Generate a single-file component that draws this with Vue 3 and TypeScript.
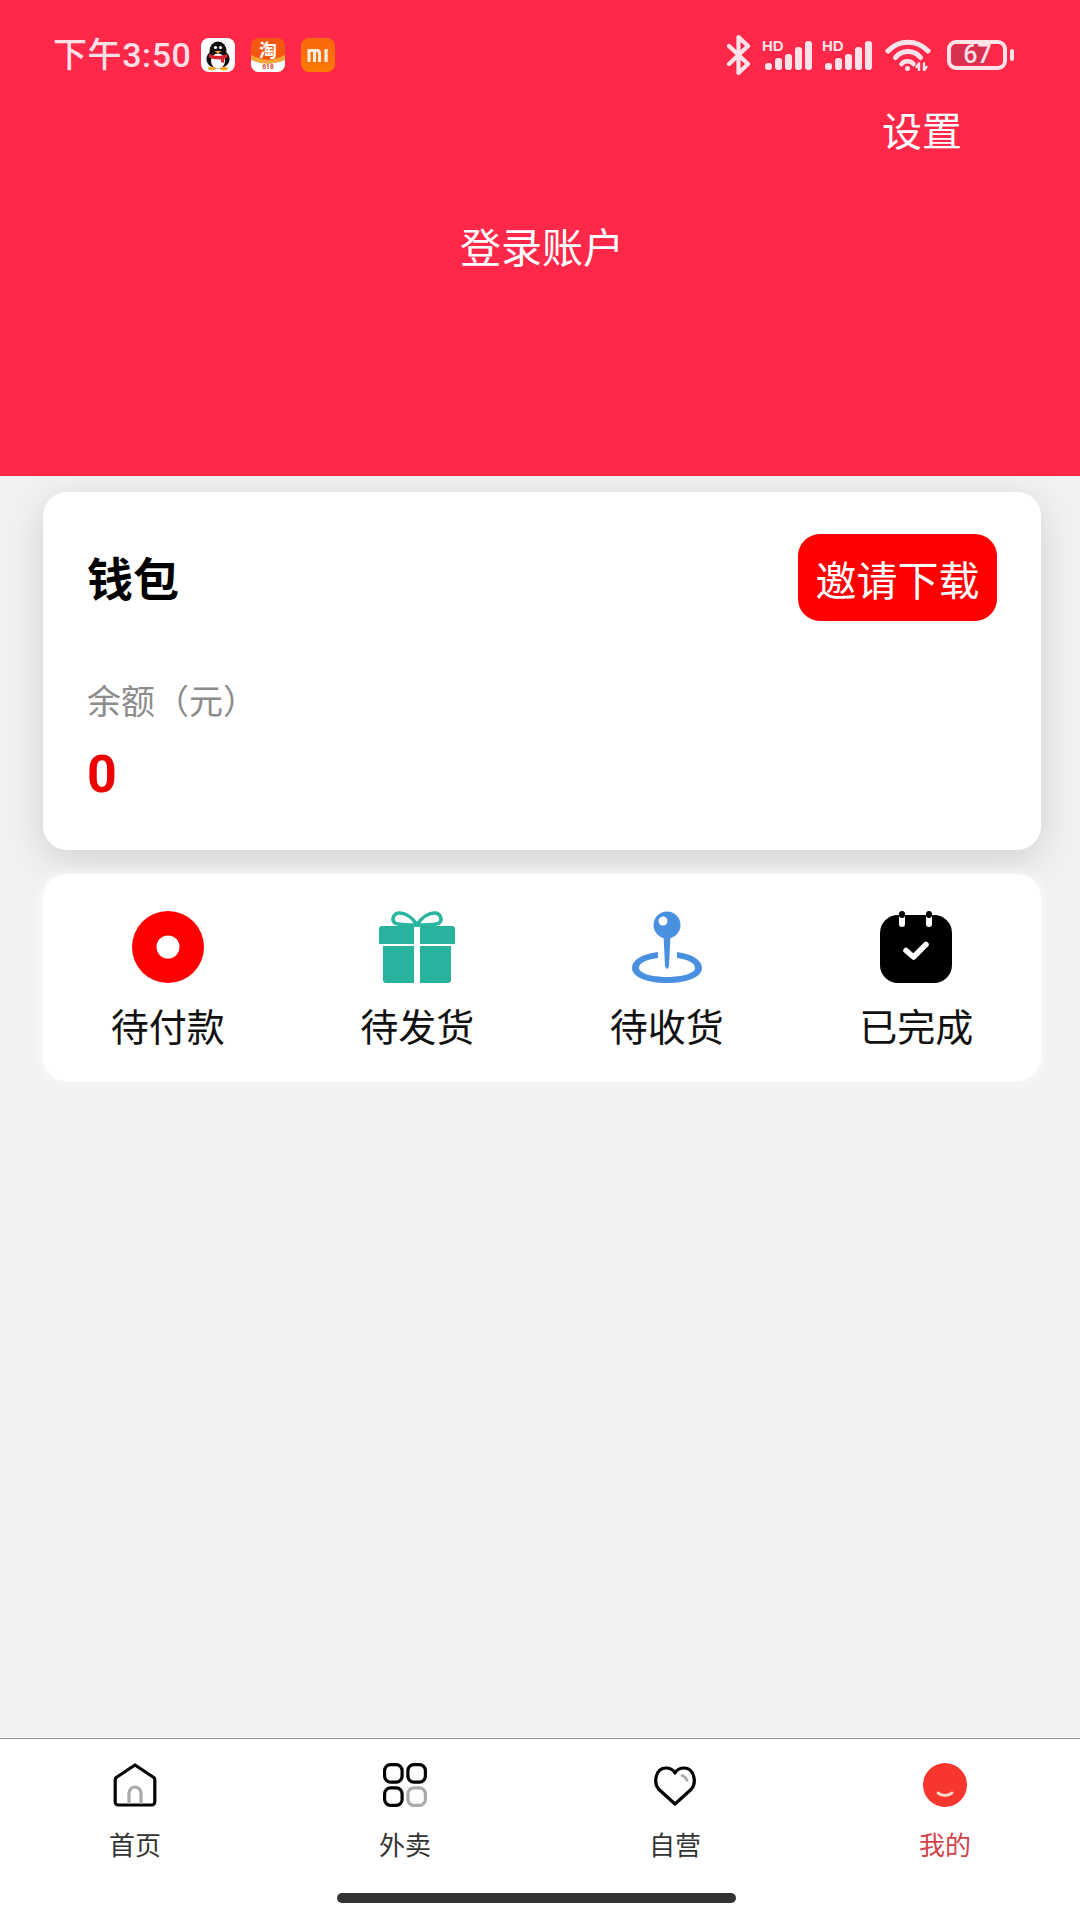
<script setup lang="ts">
const orders = ['待付款', '待发货', '待收货', '已完成']
const tabs = ['首页', '外卖', '自营', '我的']
</script>

<template>
  <div class="page">
    <header class="head">
      <div class="status">
        <div class="status-left">
          <span class="time">下午3:50</span>
          <svg class="app" viewBox="0 0 34 34">
            <rect width="34" height="34" rx="8" fill="#fff" />
            <ellipse cx="17" cy="12.500" rx="8.500" ry="9" fill="#111" />
            <ellipse cx="17" cy="21" rx="11.500" ry="9.500" fill="#111" />
            <ellipse cx="17" cy="23" rx="7" ry="7.500" fill="#fff" />
            <path d="M8 16q9 4 18 0l.5 3.500q-2 1-3.500 1.300V25l-3-1v-2.500q-6 .5-12-2z" fill="#d9232e" />
            <path d="M13.500 13h7l-3.500 2.500z" fill="#f5a623" />
            <ellipse cx="11" cy="30.500" rx="4" ry="1.800" fill="#f5a623" />
            <ellipse cx="23" cy="30.500" rx="4" ry="1.800" fill="#f5a623" />
            <circle cx="14.500" cy="9.500" r="1.600" fill="#fff" />
            <circle cx="19.500" cy="9.500" r="1.600" fill="#fff" />
          </svg>
          <svg class="app tao" viewBox="0 0 36 36">
            <rect width="36" height="36" rx="8" fill="#f4570f" />
            <path d="M0 23q18 8 36 0v5a8 8 0 0 1-8 8H8a8 8 0 0 1-8-8z" fill="#fff" />
            <path d="M0 18q18 10 36 0v5q-18 8-36 0z" fill="#f7a63a" />
            <text x="18" y="20" class="tao-text">淘</text>
            <text x="18" y="33" class="tao-sub">618</text>
          </svg>
          <svg class="app mi" viewBox="0 0 34 34">
            <defs>
              <linearGradient id="mi-grad" x1="0" y1="0" x2="0" y2="1">
                <stop offset="0" stop-color="#f9670c" />
                <stop offset="1" stop-color="#fb7a03" />
              </linearGradient>
            </defs>
            <rect width="34" height="34" rx="8" fill="url(#mi-grad)" />
            <path d="M6.500 11h9.500a4 4 0 0 1 4 4v9h-3v-8.500a1.500 1.500 0 0 0-1.500-1.500H15v10h-3V14h-2.500v10h-3z" fill="#ffeedd" />
            <rect x="23.500" y="11" width="3.200" height="13" fill="#ffeedd" />
          </svg>
        </div>
        <div class="status-right">
          <svg class="bt" viewBox="0 0 25 40" fill="none" stroke="#ffe3e8" stroke-width="4.200" stroke-linejoin="round" stroke-linecap="round">
            <path d="M3 11l19 18-9.500 9V2L22 11 3 29" />
          </svg>
          <svg v-for="n in 2" :key="n" class="signal" viewBox="0 0 50 31">
            <text x="0" y="11" class="hd">HD</text>
            <rect x="3" y="23" width="7" height="7" rx="3" fill="#ffe3e8" />
            <rect x="13" y="18" width="7" height="12" rx="3" fill="#ffe3e8" />
            <rect x="23" y="14" width="7" height="16" rx="3" fill="#ffe3e8" />
            <rect x="33" y="7" width="7" height="23" rx="3" fill="#ffe3e8" />
            <rect x="43" y="1" width="7" height="29" rx="3" fill="#ffe3e8" />
          </svg>
          <svg class="wifi" viewBox="0 0 47 32" fill="none" stroke="#ffe3e8" stroke-width="5" stroke-linecap="round">
            <path d="M3 12a27 27 0 0 1 40 0" />
            <path d="M10.500 18.500a16 16 0 0 1 25 0" />
            <path d="M16.500 25a8 8 0 0 1 12 0" stroke-width="4.500" />
            <circle cx="22.500" cy="29.500" r="1.500" fill="#ffe3e8" stroke-width="2" />
            <path d="M34 24.500v7M39 24.500v7M31.500 28l2.500-3.500M41.500 28l-2.500 3.500" stroke-width="2.400" />
          </svg>
          <div class="battery">
            <div class="battery-body">
              <div class="battery-level"></div>
              <span class="battery-num">67</span>
            </div>
            <div class="battery-nub"></div>
          </div>
        </div>
      </div>
      <div class="setting">设置</div>
      <div class="login">登录账户</div>
    </header>

    <main class="body">
      <section class="wallet">
        <div class="wallet-top">
          <span class="wallet-title">钱包</span>
          <button class="invite">邀请下载</button>
        </div>
        <div class="balance-label">余额（元）</div>
        <div class="balance">0</div>
      </section>

      <section class="orders">
        <div v-for="(o, i) in orders" :key="o" class="order">
          <svg v-if="i === 0" class="order-icon" viewBox="0 0 72 72">
            <circle cx="36" cy="36" r="36" fill="#fe0000" />
            <circle cx="36" cy="36" r="11.500" fill="#fff" />
          </svg>
          <svg v-else-if="i === 1" class="order-icon" viewBox="0 0 72 72">
            <g fill="none" stroke="#2cb5a0" stroke-width="3.600">
              <path d="M36 14C31 6 24 2 18.500 2c-6 0-8.500 7-4.500 10 3 2 15 2 22 2z" />
              <path d="M36 14c5-8 12-12 17.500-12 6 0 8.500 7 4.500 10-3 2-15 2-22 2z" />
            </g>
            <path d="M1 15h32v18H-2V18a3 3 0 0 1 3-3zM39 15h32a3 3 0 0 1 3 3v15H39z" fill="#2ab39c" />
            <path d="M2 35h31v37H5a3 3 0 0 1-3-3zM39 35h31v34a3 3 0 0 1-3 3H39z" fill="#2ab39c" />
          </svg>
          <svg v-else-if="i === 2" class="order-icon" viewBox="0 0 72 72">
            <circle cx="36" cy="14" r="13.500" fill="#4a90e0" />
            <circle cx="32" cy="10" r="4.500" fill="#fff" />
            <path d="M32.500 24h7l-1.500 31q-2 6-4 0z" fill="#4a90e0" />
            <path d="M27 41C11 43 1 49 1 57c0 9 15 15 35 15s35-6 35-15c0-8-10-14-25-16v6c11 1.500 18 5 18 10 0 5-12 9-28 9S8 62 8 57c0-5 7-8.500 19-10z" fill="#4a90e0" />
          </svg>
          <svg v-else class="order-icon" viewBox="0 0 72 72">
            <rect x="0" y="4" width="72" height="68" rx="18" fill="#000" />
            <rect x="19" y="0" width="6" height="16" rx="3" fill="#fff" />
            <rect x="46" y="0" width="6" height="16" rx="3" fill="#fff" />
            <rect x="19" y="0" width="6" height="7" rx="3" fill="#000" />
            <rect x="46" y="0" width="6" height="7" rx="3" fill="#000" />
            <path d="M26 39.500l7.500 6.500L46 33.500" fill="none" stroke="#fff" stroke-width="5.500" stroke-linecap="round" stroke-linejoin="round" />
          </svg>
          <span class="order-name">{{ o }}</span>
        </div>
      </section>
    </main>

    <nav class="tabbar">
      <div v-for="(t, i) in tabs" :key="t" class="tab" :class="{ active: i === 3 }">
        <svg v-if="i === 0" class="tab-icon" viewBox="0 0 44 44" fill="none">
          <path d="M22 2L40 14a3 3 0 0 1 1.800 2.500V39a3 3 0 0 1-3 3H5.200a3 3 0 0 1-3-3V16.500A3 3 0 0 1 4 14z" stroke="#000" stroke-width="3.200" stroke-linejoin="round" />
          <path d="M16 41V30a6 6 0 0 1 12 0v11" stroke="#aaa" stroke-width="3.200" />
        </svg>
        <svg v-else-if="i === 1" class="tab-icon" viewBox="0 0 44 44" fill="none" stroke-width="3.200">
          <rect x="1.600" y="1.600" width="17.500" height="17.500" rx="6" stroke="#000" />
          <rect x="24.900" y="1.600" width="17.500" height="17.500" rx="6" stroke="#000" />
          <rect x="1.600" y="24.900" width="17.500" height="17.500" rx="6" stroke="#000" />
          <rect x="24.900" y="24.900" width="17.500" height="17.500" rx="6" stroke="#aaa" />
        </svg>
        <svg v-else-if="i === 2" class="tab-icon" viewBox="0 0 44 44" fill="none">
          <path d="M22 41L6 26.500C0 20 2.500 5 13 5c4 0 7 1.500 9 5 2-3.500 5-5 9-5 10.500 0 13 15 7 21.500z" stroke="#000" stroke-width="3.200" stroke-linejoin="round" />
          <path d="M28 12q5 1.500 6.500 6.500" stroke="#aaa" stroke-width="2.600" />
        </svg>
        <svg v-else class="tab-icon" viewBox="0 0 44 44" fill="none">
          <circle cx="22" cy="22" r="22" fill="#f7372e" />
          <path d="M15 30q7 5 14 0" stroke="#ffd9c9" stroke-width="2.800" stroke-linecap="round" />
        </svg>
        <span class="tab-name">{{ t }}</span>
      </div>
      <div class="home-bar"></div>
    </nav>
  </div>
</template>

<style>
html, body {
  margin: 0;
  background: #f2f2f2;
}
</style>

<style scoped>
.page {
  width: 1080px;
  height: 1920px;
  display: flex;
  flex-direction: column;
  background: #f2f2f2;
  font-family: "Noto Sans CJK SC", "Liberation Sans", sans-serif;
  overflow: hidden;
}
.head {
  height: 476px;
  background: #ff2849;
  display: flex;
  flex-direction: column;
  color: #fff;
  flex-shrink: 0;
  position: relative;
  z-index: 1;
}
.status {
  height: 34px;
  margin-top: 38px;
  padding: 0 66px 0 53px;
  display: flex;
  justify-content: space-between;
  align-items: center;
}
.status-left {
  display: flex;
  align-items: center;
}
.time {
  width: 148px;
  font-family: Roboto, "Noto Sans CJK SC", sans-serif;
  font-size: 34px;
  font-weight: 500;
  letter-spacing: 0.6px;
  line-height: 34px;
  color: #ffdfe5;
  white-space: nowrap;
}
.app {
  width: 34px;
  height: 34px;
  margin-right: 16px;
  overflow: visible;
}
.tao-text {
  font-family: "Noto Sans CJK SC", sans-serif;
  font-size: 19px;
  font-weight: 700;
  fill: #fff;
  text-anchor: middle;
}
.tao-sub {
  font-family: Roboto, sans-serif;
  font-size: 7px;
  font-weight: 700;
  fill: #e0451a;
  text-anchor: middle;
}
.status-right {
  display: flex;
  align-items: center;
  gap: 10px;
}
.bt {
  width: 25px;
  height: 40px;
  margin-right: 1px;
}
.signal {
  width: 50px;
  height: 31px;
  overflow: visible;
}
.hd {
  font-family: "Liberation Sans", sans-serif;
  font-size: 15px;
  font-weight: 700;
  fill: #ffe3e8;
}
.wifi {
  width: 47px;
  height: 32px;
  margin-left: 3px;
}
.battery {
  display: flex;
  align-items: center;
  margin-left: 5px;
}
.battery-body {
  width: 60px;
  height: 30px;
  box-sizing: border-box;
  border: 4px solid #ffe3e8;
  border-radius: 9px;
  position: relative;
  display: flex;
  align-items: center;
  justify-content: center;
  padding-left: 1px;
}
.battery-level {
  position: absolute;
  left: 1px;
  top: 1px;
  bottom: 1px;
  width: 36px;
  border-radius: 3px;
  background: #d8304f;
}
.battery-num {
  position: relative;
  font-family: Roboto, sans-serif;
  font-size: 25px;
  font-weight: 500;
  line-height: 22px;
  color: #ffdfe5;
}
.battery-nub {
  width: 4px;
  height: 12px;
  margin-left: 3px;
  border-radius: 2px;
  background: #ffe3e8;
}
.setting {
  margin-top: 33px;
  padding-right: 118px;
  text-align: right;
  font-size: 40px;
  line-height: 48px;
}
.login {
  margin-top: 68px;
  padding-left: 4px;
  text-align: center;
  font-size: 41px;
  line-height: 48px;
}
.body {
  flex: 1;
  padding: 16px 39px 0 43px;
  display: flex;
  flex-direction: column;
  gap: 24px;
}
.wallet {
  height: 358px;
  box-sizing: border-box;
  padding: 42px 44px 0 44px;
  background: #fff;
  border-radius: 24px;
  box-shadow: 0 10px 40px rgba(0, 0, 0, 0.14);
}
.wallet-top {
  display: flex;
  justify-content: space-between;
  align-items: center;
}
.wallet-title {
  margin-bottom: 4px;
  font-size: 46px;
  font-weight: 700;
  color: #000;
}
.invite {
  width: 199px;
  height: 87px;
  padding: 0;
  border: 0;
  border-radius: 22px;
  background: #fe0000;
  color: #fff;
  font-family: inherit;
  font-size: 41px;
}
.balance-label {
  margin-top: 55px;
  font-size: 34px;
  line-height: 48px;
  color: #8c8c8c;
}
.balance {
  margin-top: 20px;
  font-family: Roboto, sans-serif;
  font-size: 52px;
  font-weight: 700;
  line-height: 62px;
  color: #ec0000;
}
.orders {
  height: 207px;
  box-sizing: border-box;
  padding-top: 37px;
  display: grid;
  grid-template-columns: repeat(4, 1fr);
  background: #fff;
  border-radius: 24px;
  box-shadow: 0 0 14px rgba(255, 255, 255, 0.8);
}
.order {
  display: flex;
  flex-direction: column;
  align-items: center;
}
.order-icon {
  width: 72px;
  height: 72px;
  overflow: visible;
}
.order-name {
  margin-top: 15px;
  font-size: 38px;
  line-height: 54px;
  color: #111;
}
.tabbar {
  height: 182px;
  flex-shrink: 0;
  box-sizing: border-box;
  padding-top: 24px;
  border-top: 1px solid #999;
  background: #fff;
  display: grid;
  grid-template-columns: repeat(4, 1fr);
  position: relative;
}
.tab {
  display: flex;
  flex-direction: column;
  align-items: center;
}
.tab-icon {
  width: 44px;
  height: 44px;
}
.tab-name {
  margin-top: 19px;
  font-size: 26px;
  line-height: 36px;
  color: #333;
}
.tab.active .tab-name {
  color: #d1434a;
}
.home-bar {
  position: absolute;
  left: 337px;
  bottom: 17px;
  width: 399px;
  height: 10px;
  border-radius: 5px;
  background: #333;
}
</style>
